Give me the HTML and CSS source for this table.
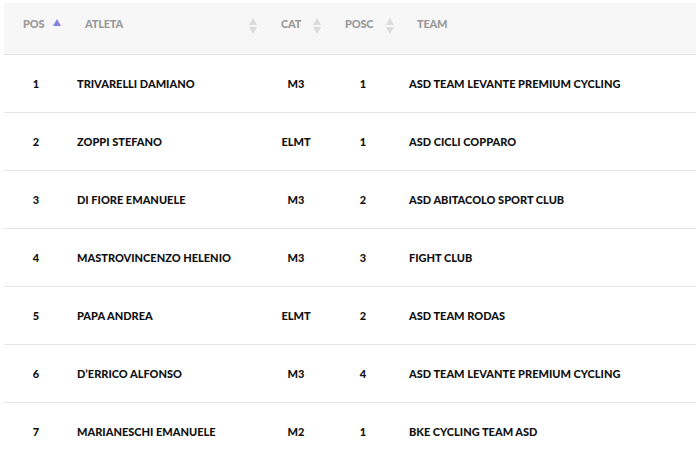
FILE: index.html
```html
<!DOCTYPE html>
<html>
<head>
<meta charset="utf-8">
<link rel="stylesheet" href="styles.css">
</head>
<body>
<table class="results">
  <colgroup>
    <col class="c-pos"><col class="c-name"><col class="c-cat"><col class="c-posc"><col class="c-team">
  </colgroup>
  <thead>
    <tr>
      <th class="h-pos"><span>POS</span><i class="sort asc"></i></th>
      <th class="h-name"><span>ATLETA</span><i class="sort both"></i></th>
      <th class="h-cat"><span>CAT</span><i class="sort both"></i></th>
      <th class="h-posc"><span>POSC</span><i class="sort both"></i></th>
      <th class="h-team"><span>TEAM</span></th>
    </tr>
  </thead>
  <tbody>
    <tr><td class="d-pos">1</td><td class="d-name">TRIVARELLI DAMIANO</td><td class="d-cat">M3</td><td class="d-posc">1</td><td class="d-team">ASD TEAM LEVANTE PREMIUM CYCLING</td></tr>
    <tr><td class="d-pos">2</td><td class="d-name">ZOPPI STEFANO</td><td class="d-cat">ELMT</td><td class="d-posc">1</td><td class="d-team">ASD CICLI COPPARO</td></tr>
    <tr><td class="d-pos">3</td><td class="d-name">DI FIORE EMANUELE</td><td class="d-cat">M3</td><td class="d-posc">2</td><td class="d-team">ASD ABITACOLO SPORT CLUB</td></tr>
    <tr><td class="d-pos">4</td><td class="d-name">MASTROVINCENZO HELENIO</td><td class="d-cat">M3</td><td class="d-posc">3</td><td class="d-team">FIGHT CLUB</td></tr>
    <tr><td class="d-pos">5</td><td class="d-name">PAPA ANDREA</td><td class="d-cat">ELMT</td><td class="d-posc">2</td><td class="d-team">ASD TEAM RODAS</td></tr>
    <tr><td class="d-pos">6</td><td class="d-name">D’ERRICO ALFONSO</td><td class="d-cat">M3</td><td class="d-posc">4</td><td class="d-team">ASD TEAM LEVANTE PREMIUM CYCLING</td></tr>
    <tr><td class="d-pos">7</td><td class="d-name">MARIANESCHI EMANUELE</td><td class="d-cat">M2</td><td class="d-posc">1</td><td class="d-team">BKE CYCLING TEAM ASD</td></tr>
  </tbody>
</table>
</body>
</html>
```
FILE: styles.css
```css
html, body {
  margin: 0;
  padding: 0;
  background: #ffffff;
  overflow: hidden;
}
body {
  padding: 3px 0 0 4px;
  font-family: Lato, "Liberation Sans", sans-serif;
  font-weight: 900;
  font-size: 11px;
}
.results {
  width: 692px;
  border-collapse: collapse;
  table-layout: fixed;
}
.c-pos { width: 64px; }
.c-name { width: 202px; }
.c-cat { width: 60px; }
.c-posc { width: 70px; }
.c-team { width: auto; }

.results thead tr {
  background: #f7f7f7;
  border-bottom: 1px solid #e4e4e4;
}
.results th {
  height: 51px;
  padding: 0;
  text-align: left;
  color: #999999;
  font-weight: 900;
  letter-spacing: -0.2px;
  position: relative;
  vertical-align: top;
}
.results th span {
  display: block;
  padding-top: 14px;
  line-height: 13px;
}
.h-pos span { padding-left: 19px; }
.h-name span { padding-left: 17px; }
.h-cat span { padding-left: 11px; }
.h-posc span { padding-left: 15px; }
.h-team span { padding-left: 17px; }

.sort {
  position: absolute;
  top: 12px;
  width: 8px;
  height: 18px;
}
.sort::before, .sort::after {
  content: "";
  position: absolute;
  left: 0;
  border-left: 4px solid transparent;
  border-right: 4px solid transparent;
}
.sort.both::before {
  top: 3px;
  border-bottom: 7px solid #dcdcdc;
}
.sort.both::after {
  top: 12px;
  border-top: 7px solid #dcdcdc;
}
.sort.asc::before {
  top: 4px;
  border-bottom: 7px solid #7f83de;
}
.h-pos .sort { left: 49px; }
.h-name .sort { left: 181px; }
.h-cat .sort { left: 43px; }
.h-posc .sort { left: 56px; }

.results td {
  height: 57px;
  padding: 0;
  color: #111111;
  border-bottom: 1px solid #e6e6e6;
  vertical-align: middle;
  white-space: nowrap;
}
.d-pos { text-align: center; }
.d-name { padding-left: 9px !important; }
.d-cat { text-align: center; padding-right: 8px !important; }
.d-posc { text-align: center; padding-right: 4px !important; }
.d-team { padding-left: 9px !important; }
```
